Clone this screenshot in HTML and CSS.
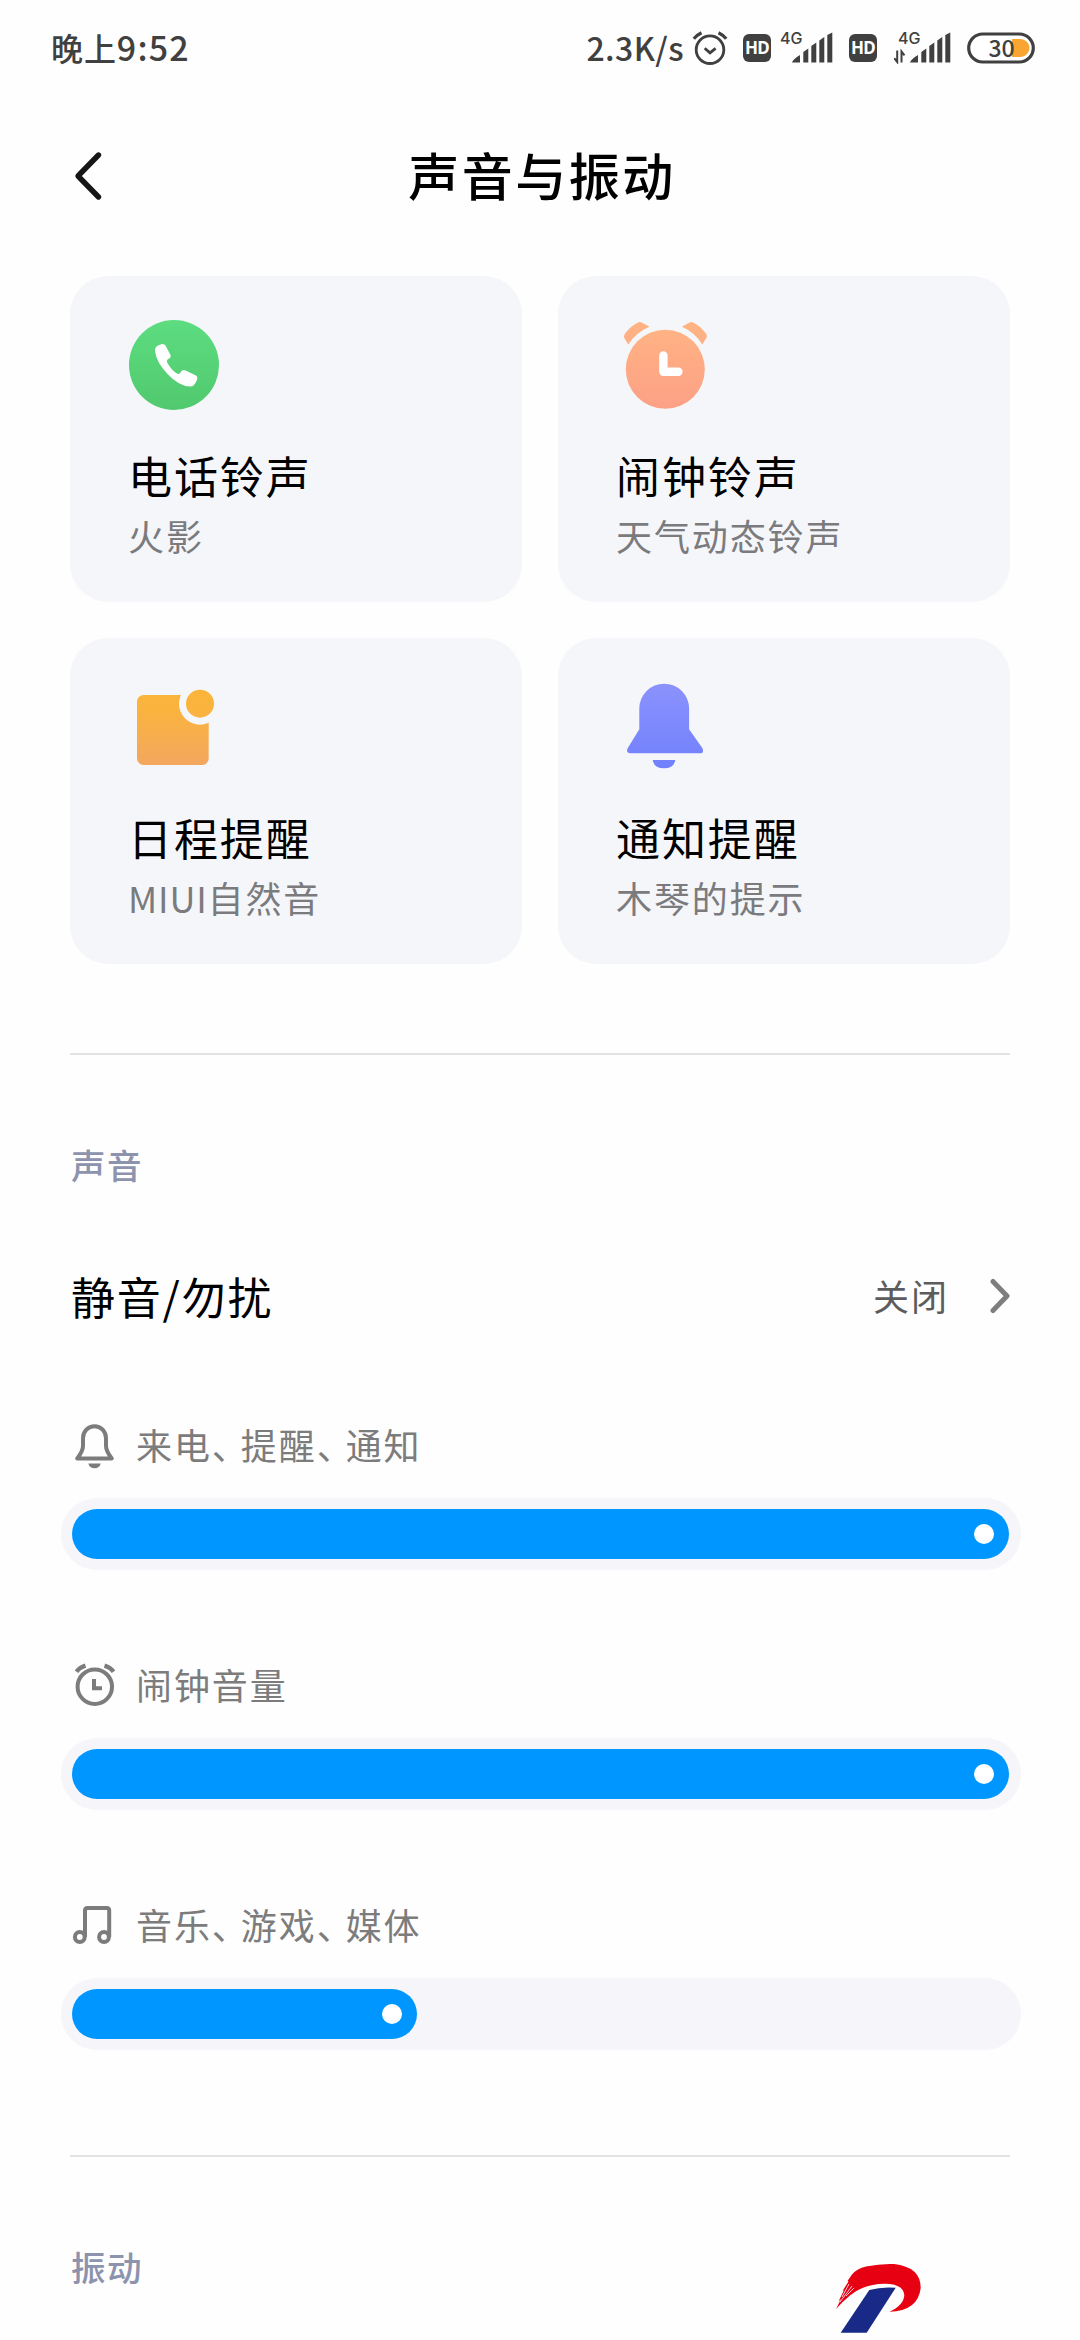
FILE: index.html
```html
<!DOCTYPE html>
<html lang="zh-CN">
<head>
<meta charset="utf-8">
<title>声音与振动</title>
<link rel="stylesheet" href="styles.css">
</head>
<body>
<div class="screen">
  <div class="status">
    <span class="time">晚上<b>9:52</b></span>
    <span class="speed">2.3K/s</span>
    <svg class="st-alarm" width="36" height="36" viewBox="0 0 36 36" fill="none" stroke="#404040" stroke-width="2.8">
      <circle cx="18" cy="19.700" r="13.800"/><path d="M1.800 8.800Q5 5 9.500 2.800M34.200 8.800Q31 5 26.500 2.800" stroke-width="3.200"/><path d="M12.700 18.300l5.300 4.600 5.600-4.600"/>
    </svg>
    <span class="hd">HD</span>
    <svg class="st-sig" width="54" height="42" viewBox="0 -8 54 42" fill="#404040">
      <text class="net" x="0" y="13.500">4G</text>
      <path d="M12 32.500Q13 29 20 25v7.500zM23.300 32.500V22l5-3.500v14zM31.300 32.500V16l5-3.500v20zM39.300 32.500V10.500l5-3.500v25.500zM47.300 32.500V5l5-2.500v30z"/>
    </svg>
    <span class="hd">HD</span>
    <svg class="st-sig2" width="58" height="42" viewBox="-4 -8 58 42" fill="#404040">
      <text class="net" x="0" y="13.500">4G</text>
      <path d="M12 32.500Q13 29 20 25v7.500zM23.300 32.500V22l5-3.500v14zM31.300 32.500V16l5-3.500v20zM39.300 32.500V10.500l5-3.500v25.500zM47.300 32.500V5l5-2.500v30z"/>
      <path d="M-.8 20.500V32l-3-3.800M3.500 32.500V21.500l3 3.800" fill="none" stroke="#404040" stroke-width="2"/>
    </svg>
    <svg class="st-bat" width="68" height="48" viewBox="0 -8 68 48">
      <rect x="1.700" y="2" width="64.600" height="28" rx="14" fill="#fff" stroke="#404040" stroke-width="3.200"/>
      <path d="M45 7h8.500a8.800 8.800 0 0 1 0 18H45z" fill="#f8a532"/>
      <text class="pct" x="21.500" y="24.500">30</text>
    </svg>
  </div>

  <header class="header">
    <svg class="back" width="34" height="52" viewBox="0 0 34 52" fill="none" stroke="#161616" stroke-width="5.400" stroke-linecap="round" stroke-linejoin="round"><path d="M28.500 5L8 26l20.500 21"/></svg>
    <h1>声音与振动</h1>
  </header>

  <main>
    <section class="cards">
      <article class="card">
        <svg width="96" height="96" viewBox="0 0 96 96">
          <defs><linearGradient id="green" x2="0" y2="1"><stop stop-color="#5ddc80"/><stop offset="1" stop-color="#51c96e"/></linearGradient></defs>
          <circle cx="48" cy="48" r="45" fill="url(#green)"/>
          <path d="M32 28.500Q37.500 25.500 39.500 28.500L44.500 38Q45.500 40.500 41.500 42.500Q40 44 41.500 46Q45.500 53.500 51.500 56.800Q53.500 57.500 54.500 55.500Q56.500 52.300 59 53.300L70 58.500Q72.500 60 70.500 64Q68 69.500 64.500 69.500Q53 69.500 41.500 57Q30.500 45.500 29 34Q28.600 30.500 32 28.500Z" fill="#fff"/>
        </svg>
        <h2>电话铃声</h2><p>火影</p>
      </article>
      <article class="card">
        <svg width="96" height="96" viewBox="0 0 96 96">
          <defs><linearGradient id="peach" gradientUnits="userSpaceOnUse" x1="0" y1="5" x2="0" y2="92"><stop stop-color="#ffb483"/><stop offset="1" stop-color="#fda086"/></linearGradient></defs>
          <g fill="url(#peach)"><circle cx="51.300" cy="52.300" r="39.500"/>
          <path d="M10.300 21Q9.500 19 10.500 17.500Q16 9 25 5Q27 4.500 35.500 9.800Q22 15.500 14.300 27.500Z"/>
          <path d="M92.300 21Q93.500 19 92.500 17.500Q87 9 78 5Q76 4.500 68 9.800Q81 15.500 88.300 27.500Z"/></g>
          <path d="M49.400 38.500v16.300h15" fill="none" stroke="#fff" stroke-width="8.400" stroke-linecap="round" stroke-linejoin="round"/>
        </svg>
        <h2>闹钟铃声</h2><p>天气动态铃声</p>
      </article>
      <article class="card">
        <svg width="96" height="96" viewBox="0 0 96 96">
          <defs><linearGradient id="amber" gradientUnits="userSpaceOnUse" x1="0" y1="10" x2="0" y2="86"><stop stop-color="#fab538"/><stop offset=".3" stop-color="#fab33f"/><stop offset="1" stop-color="#f2a75f"/></linearGradient></defs>
          <rect x="11" y="16" width="71.700" height="70" rx="6.500" fill="url(#amber)"/>
          <circle cx="74" cy="24.700" r="21" fill="#f5f6fa"/><circle cx="74" cy="24.700" r="14" fill="url(#amber)"/>
        </svg>
        <h2>日程提醒</h2><p><span class="latin">MIUI</span>自然音</p>
      </article>
      <article class="card">
        <svg width="96" height="96" viewBox="0 0 96 96">
          <defs><linearGradient id="violet" gradientUnits="userSpaceOnUse" x1="0" y1="4" x2="0" y2="90"><stop stop-color="#8b92fc"/><stop offset="1" stop-color="#7180fd"/></linearGradient></defs>
          <path d="M25.300 29.600a24.900 24.900 0 0 1 49.800 0V50.300L88.300 69Q90.500 74.300 86 74.300H16.500Q11.500 74.300 13.800 69L25.300 50.300ZM38.700 81H61.300Q60 89.300 50 89.300T38.700 81Z" fill="url(#violet)"/>
        </svg>
        <h2>通知提醒</h2><p>木琴的提示</p>
      </article>
    </section>

    <hr>

    <h3>声音</h3>
    <div class="row">
      <span class="row-title">静音/勿扰</span>
      <span class="row-value">关闭</span>
      <svg width="24" height="36" viewBox="0 0 24 36" fill="none" stroke="#7e7e7e" stroke-width="5" stroke-linecap="round" stroke-linejoin="round"><path d="M7 3.500L21 18 7 32.500"/></svg>
    </div>

    <section class="volume">
      <div class="label">
        <svg width="48" height="48" viewBox="0 0 48 48" fill="none" stroke="#7c7c7c" stroke-width="4" stroke-linejoin="round"><path d="M13 16.200a11.500 12 0 0 1 23 0V24Q36 29 41.800 36.500H7.200Q13 29 13 24Z"/><path d="M18.300 41.500h12.400q-1.200 4.800-6.200 4.800t-6.200-4.800z" fill="#7c7c7c" stroke="none"/></svg>
        <span>来电<i>、</i>提醒<i>、</i>通知</span>
      </div>
      <div class="track"><div class="fill" style="width:937px"></div></div>
    </section>
    <section class="volume">
      <div class="label">
        <svg width="48" height="48" viewBox="0 0 48 48" fill="none" stroke="#7c7c7c" stroke-width="4"><circle cx="24.800" cy="24.700" r="17.200"/><path d="M24 17v9.200h8"/><path d="M6.500 9.800Q9.500 5.500 15.500 3.700M43.500 9.800Q40.500 5.500 34.500 3.700" stroke-width="4.400"/></svg>
        <span>闹钟音量</span>
      </div>
      <div class="track"><div class="fill" style="width:937px"></div></div>
    </section>
    <section class="volume">
      <div class="label">
        <svg width="48" height="48" viewBox="0 0 48 48" fill="none" stroke="#7c7c7c" stroke-width="4" stroke-linejoin="round"><circle cx="9.800" cy="35" r="4.900"/><circle cx="34" cy="35" r="4.900"/><path d="M15 35V8.500Q15 6 17.500 6H36.700Q39.200 6 39.200 8.500V35"/></svg>
        <span>音乐<i>、</i>游戏<i>、</i>媒体</span>
      </div>
      <div class="track"><div class="fill" style="width:345px"></div></div>
    </section>

    <hr class="second">
    <h3>振动</h3>
  </main>

  <svg class="badge" width="90" height="73" viewBox="0 0 90 73">
    <path d="M2 47L7 37 4.500 39.500 10 28 8.500 29 14.500 19.500 13.500 19 18 12.500Q23 6.500 32 4.500Q46 1.500 60 2Q86.700 5 86.700 26Q84 49 55.500 49.800Q70 43 70.300 33Q69 21.500 50 21.700Q30 22 16 33.500Q8 40 2 47Z" fill="#e60012"/>
    <path d="M15 22L8 35M18 24L6 40M20 26L12 34" stroke="#fff" stroke-width=".8"/>
    <path d="M35.300 28Q48 24.500 61.700 25.800L32.700 70.700H6.700Z" fill="#182987"/>
  </svg>
</div>
</body>
</html>
```
FILE: styles.css
```css
* { box-sizing: border-box; margin: 0; padding: 0; }
body { background: #fff; }
svg { display: block; flex: none; }
.screen {
  position: relative; width: 1080px; height: 2340px; overflow: hidden; background: #fefefe;
  font-family: "Noto Sans CJK SC", sans-serif; color: #000;
}

.status { display: flex; align-items: center; height: 96px; padding: 0 45px 0 51px; color: #404040; }
.time { font-size: 32px; font-weight: 500; line-height: 40px; letter-spacing: .9px; margin: 0 auto 2px 0; white-space: nowrap; }
.time b { font-size: 34px; font-weight: 500; letter-spacing: 1.200px; }
.speed { margin-bottom: 2px; font-size: 32px; font-weight: 500; line-height: 40px; letter-spacing: .4px; }
.st-alarm { margin: 0 15px 0 8px; }
.hd {
  width: 28px; height: 28px; border-radius: 6px; background: #404040; color: #fff;
  font: 700 17px/28px "Noto Sans", sans-serif; text-align: center; letter-spacing: -.8px;
}
.st-sig { margin: 0 15px 11px 9px; }
.st-sig2 { margin: 0 15px 11px 17px; }
.net { font: 500 16px Inter, sans-serif; }
.pct { font: 500 23px "Noto Sans CJK SC", sans-serif; fill: #404040; }

.header { display: flex; align-items: center; height: 160px; padding: 0 70px; }
.back { margin-right: -30px; }
h1 { flex: 1; margin-bottom: 4px; text-align: center; font-size: 51px; font-weight: 500; line-height: 64px; letter-spacing: 2.500px; }

main { padding: 20px 70px 0; }
.cards { display: grid; grid-template-columns: 452px 452px; gap: 36px; }
.card { height: 326px; padding: 41px 56px 0; border-radius: 38px; background: #f5f6fa; }
.card h2 { margin: 32px 0 0 2px; font-size: 44px; font-weight: 400; line-height: 60px; letter-spacing: 1.900px; white-space: nowrap; }
.card p { margin: 3px 0 0 2px; font-size: 36px; line-height: 54px; letter-spacing: 1.900px; color: #7b7b7e; white-space: nowrap; }
.card .latin { letter-spacing: .8px; }

hr { height: 2px; border: 0; background: #e3e3e3; margin-top: 89px; }
h3 { margin: 84px 0 0 1px; font-size: 34.500px; font-weight: 500; line-height: 50px; letter-spacing: 1.500px; color: #8d93ad; }

.row { display: flex; align-items: center; height: 70px; margin: 72px 0 89px; }
.row-title { flex: 1; margin-left: 1px; font-size: 44px; line-height: 60px; letter-spacing: 1.800px; }
.row-value { margin: 0 37px 2px 0; font-size: 36px; line-height: 50px; letter-spacing: 2px; color: #5c5c5c; }

.volume { height: 240px; }
.label { display: flex; align-items: center; height: 52px; font-size: 36px; letter-spacing: 1.900px; color: #7c7c7c; }
.label span { margin: 0 0 3px 18px; line-height: 49px; }
.label i { font-style: normal; font-feature-settings: "halt"; letter-spacing: 11px; }
.track { width: 960px; height: 72px; margin: 26px 0 0 -9px; padding: 11px; border-radius: 36px; background: #f5f5fa; }
.fill { display: flex; align-items: center; justify-content: flex-end; height: 50px; padding-right: 15px; border-radius: 25px; background: #0096ff; }
.fill::after { content: ""; width: 20px; height: 20px; border-radius: 50%; background: #fff; }

.second { margin-top: 15px; }
.badge { position: absolute; left: 834px; top: 2262px; }
```
